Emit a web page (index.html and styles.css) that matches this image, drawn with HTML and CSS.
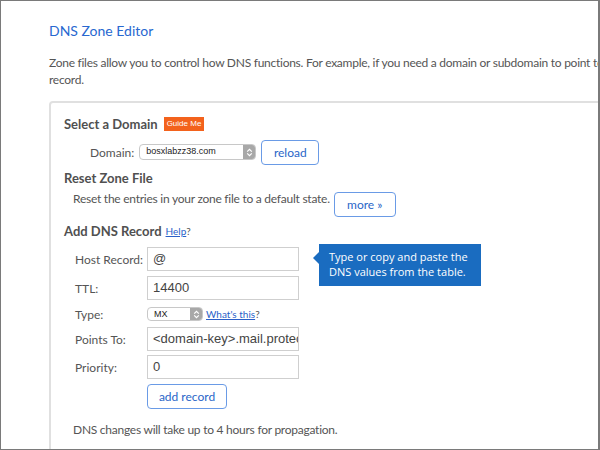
FILE: index.html
```html
<!DOCTYPE html>
<html>
<head>
<meta charset="utf-8">
<link rel="stylesheet" href="styles.css">
</head>
<body>
<div class="frame">
  <h1 class="title">DNS Zone Editor</h1>
  <p class="intro"><span class="intro-line">Zone files allow you to control how DNS functions. For example, if you need a domain or subdomain to point to another</span><br>record.</p>
  <div class="panel">
    <div class="heading">Select a Domain <span class="badge">Guide Me</span></div>
    <div class="domain-row">
      <span class="label-inline">Domain:</span>
      <div class="select select-domain"><span class="select-text">bosxlabzz38.com</span><span class="stepper"><svg width="7" height="9" viewBox="0 0 7 9"><path d="M1.2 3.6 L3.5 1.3 L5.8 3.6 M1.2 5.4 L3.5 7.7 L5.8 5.4" fill="none" stroke="#fff" stroke-width="1.2"/></svg></span></div>
      <button class="btn btn-reload">reload</button>
    </div>
    <div class="heading heading-reset">Reset Zone File</div>
    <div class="reset-row">
      <span class="reset-text">Reset the entries in your zone file to a default state.</span>
      <button class="btn btn-more">more »</button>
    </div>
    <div class="heading heading-add">Add DNS Record <a class="help">Help</a><span class="q">?</span></div>
    <div class="form">
      <div class="row row-host"><span class="lbl">Host Record:</span><div class="input">@</div></div>
      <div class="row row-ttl"><span class="lbl">TTL:</span><div class="input">14400</div></div>
      <div class="row row-type"><span class="lbl">Type:</span><div class="select select-type"><span class="select-text">MX</span><span class="stepper"><svg width="7" height="9" viewBox="0 0 7 9"><path d="M1.2 3.6 L3.5 1.3 L5.8 3.6 M1.2 5.4 L3.5 7.7 L5.8 5.4" fill="none" stroke="#fff" stroke-width="1.2"/></svg></span></div><a class="whats">What's this</a><span class="q2">?</span></div>
      <div class="row row-points"><span class="lbl">Points To:</span><div class="input">&lt;domain-key&gt;.mail.protection.outlook.com</div></div>
      <div class="row row-priority"><span class="lbl">Priority:</span><div class="input">0</div></div>
      <div class="row row-btn"><span class="lbl"></span><button class="btn btn-add">add record</button></div>
    </div>
    <p class="note">DNS changes will take up to 4 hours for propagation.</p>
    <div class="tooltip">Type or copy and paste the DNS values from the table.</div>
  </div>
</div>
</body>
</html>
```
FILE: styles.css
```css
html, body {
  margin: 0;
  padding: 0;
  background: #fff;
}
.frame {
  width: 600px;
  height: 450px;
  box-sizing: border-box;
  border: 1px solid #7a7a7a;
  border-right-width: 2px;
  overflow: hidden;
  padding-left: 48px;
  font-family: Lato, "Open Sans", sans-serif;
  color: #555;
}
.title {
  margin: 21px 0 0 0;
  font-size: 14px;
  font-weight: 400;
  line-height: 18px;
  color: #2868d0;
}
.intro {
  margin: 14px 0 0 0;
  font-size: 12px;
  letter-spacing: -0.26px;
  line-height: 17px;
  color: #555;
  white-space: nowrap;
}
.panel {
  position: relative;
  margin-top: 13px;
  width: 600px;
  height: 400px;
  border: 2px solid #e0e0e0;
  border-radius: 4px 0 0 0;
  padding: 13px 0 0 13px;
  box-sizing: border-box;
}
.heading {
  font-size: 13px;
  font-weight: 700;
  line-height: 16px;
  height: 16px;
  color: #505050;
  display: flex;
  align-items: center;
}
.badge {
  margin-left: 6px;
  background: #f3621c;
  color: #fff;
  font-family: "Liberation Sans", Arial, sans-serif;
  font-size: 8px;
  font-weight: 400;
  line-height: 14px;
  padding: 0 3px;
}
.domain-row {
  display: flex;
  align-items: center;
  margin-top: 8px;
  padding-left: 26px;
  height: 24px;
}
.label-inline {
  font-size: 12px;
  margin-right: 5px;
}
.select {
  display: flex;
  align-items: stretch;
  height: 15px;
  border: 1px solid #c8c8c8;
  border-radius: 4px;
  background: #fff;
  box-sizing: border-box;
  overflow: hidden;
}
.select-domain { width: 117px; height: 16px; }
.select-type { width: 56px; height: 14px; }
.select-text {
  flex: 1;
  font-family: "Liberation Sans", Arial, sans-serif;
  font-size: 9px;
  line-height: 13px;
  color: #222;
  padding-left: 6px;
}
.select-type .select-text { line-height: 12px; }
.stepper {
  width: 12px;
  background: #a8a8a8;
  display: flex;
  align-items: center;
  justify-content: center;
}
.btn {
  font-family: Lato, sans-serif;
  font-size: 12px;
  color: #2a66c8;
  background: #fff;
  border: 1px solid #6a9be6;
  border-radius: 4px;
  padding: 0;
  height: 25px;
}
.btn-reload {
  margin-left: 5px;
  width: 58px;
}
.heading-reset {
  margin-top: 6px;
}
.reset-row {
  display: flex;
  align-items: flex-start;
  margin-top: 5px;
  padding-left: 9px;
  height: 26px;
}
.reset-text {
  font-size: 12px;
  letter-spacing: -0.25px;
  line-height: 16px;
}
.btn-more {
  margin-left: 4px;
  margin-top: 1px;
  width: 62px;
}
.heading-add {
  margin-top: 6px;
}
.help {
  margin-left: 4px;
  font-size: 10px;
  font-weight: 400;
  color: #2a5fc8;
  text-decoration: underline;
}
.q {
  font-size: 10px;
  font-weight: 400;
  color: #555;
}
.form {
  margin-top: 8px;
  padding-left: 11px;
  display: flex;
  flex-direction: column;
}
.row {
  display: flex;
  align-items: center;
  height: 24px;
}
.row-ttl { margin-top: 5px; }
.row-type { height: 14px; margin-top: 7px; }
.row-points { margin-top: 6px; }
.row-priority { margin-top: 4px; }
.row-btn { height: 25px; margin-top: 5px; }
.lbl {
  width: 72px;
  font-size: 12px;
  color: #555;
}
.input {
  width: 152px;
  height: 24px;
  box-sizing: border-box;
  border: 1px solid #cfcfcf;
  font-family: "Liberation Sans", Arial, sans-serif;
  font-size: 13px;
  line-height: 22px;
  padding-left: 5px;
  color: #444;
  white-space: nowrap;
  overflow: hidden;
}
.whats {
  margin-left: 3px;
  font-size: 10px;
  color: #2a5fc8;
  text-decoration: underline;
}
.q2 { font-size: 10px; color: #555; }
.btn-add { width: 80px; height: 25px; }
.note {
  margin: 13px 0 0 9px;
  font-size: 12px;
  letter-spacing: -0.25px;
  line-height: 16px;
  color: #555;
}
.tooltip {
  position: absolute;
  left: 268px;
  top: 141px;
  width: 162px;
  height: 42px;
  box-sizing: border-box;
  background: #1a6cc0;
  color: #fff;
  font-family: "Open Sans", sans-serif;
  font-size: 11px;
  line-height: 15px;
  padding: 5px 6px 0 10px;
}
.tooltip::before {
  content: "";
  position: absolute;
  left: -6px;
  top: 8px;
  border-top: 6px solid transparent;
  border-bottom: 6px solid transparent;
  border-right: 6px solid #1a6cc0;
}
```
